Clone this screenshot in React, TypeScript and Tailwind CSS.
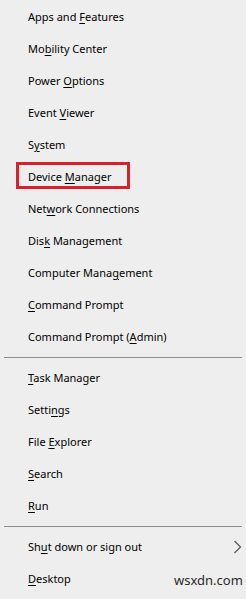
import React from "react";

type Item = { pre: string; u: string; post: string; boxed?: boolean; arrow?: boolean };

const group1: Item[] = [
  { pre: "Apps and ", u: "F", post: "eatures" },
  { pre: "Mo", u: "b", post: "ility Center" },
  { pre: "Power ", u: "O", post: "ptions" },
  { pre: "Event ", u: "V", post: "iewer" },
  { pre: "S", u: "y", post: "stem" },
  { pre: "Device ", u: "M", post: "anager", boxed: true },
  { pre: "Net", u: "w", post: "ork Connections" },
  { pre: "Dis", u: "k", post: " Management" },
  { pre: "Computer Mana", u: "g", post: "ement" },
  { pre: "", u: "C", post: "ommand Prompt" },
  { pre: "Command Prompt (", u: "A", post: "dmin)" },
];

const group2: Item[] = [
  { pre: "", u: "T", post: "ask Manager" },
  { pre: "Setti", u: "n", post: "gs" },
  { pre: "File ", u: "E", post: "xplorer" },
  { pre: "", u: "S", post: "earch" },
  { pre: "", u: "R", post: "un" },
];

const group3: Item[] = [
  { pre: "Sh", u: "u", post: "t down or sign out", arrow: true },
  { pre: "", u: "D", post: "esktop" },
];

function Row({ item }: { item: Item }) {
  return (
    <div className="relative flex h-[32px] items-center pl-[28px] text-[11px] text-[#000000]">
      <span className="whitespace-nowrap">
        {item.pre}
        <u className="underline-offset-[2px]">{item.u}</u>
        {item.post}
      </span>
      {item.boxed && (
        <div className="absolute left-[16px] top-[1px] h-[27px] w-[114px] border-[3px] border-[#d7212c]" />
      )}
      {item.arrow && (
        <svg
          className="absolute left-[233px] top-[9px]"
          width="9"
          height="14"
          viewBox="0 0 9 14"
        >
          <path d="M1.5 1 L7.5 7 L1.5 13" fill="none" stroke="#555" strokeWidth="1.2" />
        </svg>
      )}
    </div>
  );
}

function Sep() {
  return (
    <div className="flex h-[9px] items-center px-[4px]">
      <div className="h-px w-full bg-[#8c8c8c]" />
    </div>
  );
}

export default function App() {
  return (
    <div
      className="relative h-[599px] w-[246px] overflow-hidden bg-[#eeeeee] pt-px"
      style={{ fontFamily: '"Noto Sans", "Open Sans", sans-serif' }}
    >
      {group1.map((it, i) => (
        <Row key={i} item={it} />
      ))}
      <Sep />
      {group2.map((it, i) => (
        <Row key={i} item={it} />
      ))}
      <Sep />
      {group3.map((it, i) => (
        <Row key={i} item={it} />
      ))}
      <div className="absolute left-[174px] top-[571px] text-[13px] text-[#2a2a2a]">
        wsxdn.com
      </div>
    </div>
  );
}
